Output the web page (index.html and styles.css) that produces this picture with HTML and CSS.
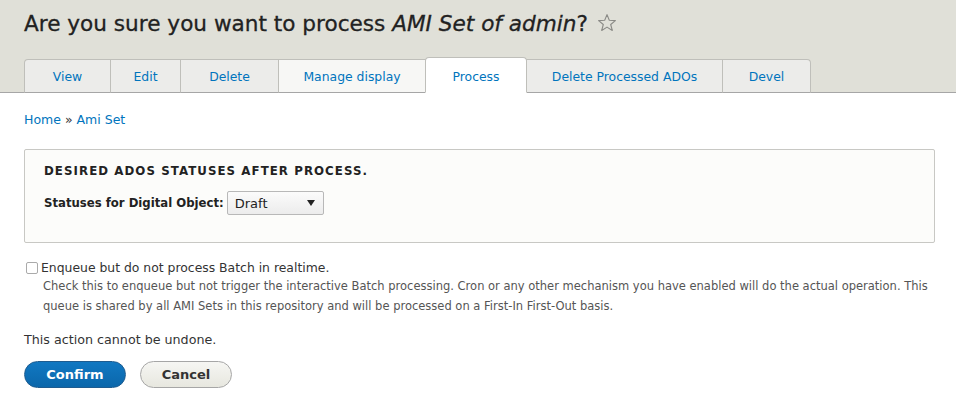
FILE: index.html
```html
<!DOCTYPE html>
<html>
<head>
<meta charset="utf-8">
<link rel="stylesheet" href="styles.css">
</head>
<body>
<header class="header">
  <h1 class="title">Are you sure you want to process <em>AMI Set of admin</em>? <svg class="star" width="20" height="20" viewBox="0 0 20 20"><path d="M10 1.6 L12.3 7.3 L18.4 7.6 L13.7 11.5 L15.3 17.5 L10 14.1 L4.7 17.5 L6.3 11.5 L1.6 7.6 L7.7 7.3 Z" fill="none" stroke="#8a8a86" stroke-width="1.1" stroke-linejoin="round"/></svg></h1>
  <nav class="tabs">
    <a class="tab t-view">View</a>
    <a class="tab t-edit">Edit</a>
    <a class="tab t-delete">Delete</a>
    <a class="tab t-manage">Manage display</a>
    <a class="tab t-process active">Process</a>
    <a class="tab t-dpa">Delete Processed ADOs</a>
    <a class="tab t-devel">Devel</a>
  </nav>
</header>
<main class="content">
  <div class="breadcrumb"><a>Home</a> » <a>Ami Set</a></div>
  <fieldset class="fieldset">
    <div class="legend">Desired ADOs statuses after process.</div>
    <div class="field">
      <label class="label">Statuses for Digital Object:</label>
      <div class="select"><span>Draft</span><span class="arrow"></span></div>
    </div>
  </fieldset>
  <div class="check">
    <div class="check-row"><span class="box"></span><span class="check-label">Enqueue but do not process Batch in realtime.</span></div>
    <div class="desc">Check this to enqueue but not trigger the interactive Batch processing. Cron or any other mechanism you have enabled will do the actual operation. This queue is shared by all AMI Sets in this repository and will be processed on a First-In First-Out basis.</div>
  </div>
  <p class="warn">This action cannot be undone.</p>
  <div class="actions">
    <button class="btn primary">Confirm</button>
    <button class="btn">Cancel</button>
  </div>
</main>
</body>
</html>
```
FILE: styles.css
```css
html, body { margin: 0; padding: 0; background: #fff; }
body {
  font-family: "DejaVu Sans", "Lucida Grande", sans-serif;
  font-size: 13px;
  color: #333;
}
.header {
  background: #e0e0d8;
  border-bottom: 1px solid #a6a6a6;
  padding: 0 24px;
  height: 93px;
  box-sizing: border-box;
  display: flex;
  flex-direction: column;
  justify-content: space-between;
}
.title {
  margin: 0;
  padding-top: 9px;
  font-size: 21.6px;
  font-weight: normal;
  color: #222;
  line-height: 30px;
  display: flex;
  align-items: center;
  white-space: pre;
  -webkit-text-stroke: 0.3px #222;
}
.title em { font-style: italic; }
.star { margin-left: 2px; margin-top: -2px; }
.tabs {
  display: flex;
  align-items: flex-end;
  margin-bottom: -1px;
}
.tab {
  display: block;
  box-sizing: border-box;
  height: 34px;
  line-height: 33px;
  padding: 0;
  text-align: center;
  white-space: nowrap;
  background: #ececea;
  border: 1px solid #bfbfba;
  border-bottom: 1px solid #a6a6a6;
  margin-right: -1px;
  color: #0074bd;
  font-size: 12.4px;
}
.t-view { width: 87px; border-top-left-radius: 4px; }
.t-edit { width: 71px; }
.t-delete { width: 99px; }
.t-manage { width: 148px; background: #f7f7f5; }
.t-process { width: 102px; }
.t-dpa { width: 197px; }
.t-devel { width: 89px; border-top-right-radius: 4px; }
.tab.active {
  background: #fff;
  height: 36px;
  line-height: 37px;
  border-radius: 4px 4px 0 0;
  border-bottom-color: #fff;
  position: relative;
  z-index: 1;
}
.content { padding: 0 21px 0 24px; }
.breadcrumb {
  margin-top: 19px;
  color: #333;
  font-size: 12.5px;
  line-height: 16px;
}
.breadcrumb a { color: #0074bd; }
.fieldset {
  margin: 21px 0 0 0;
  padding: 13px 19px 27px 19px;
  border: 1px solid #c8c8c4;
  border-radius: 2px;
  background: #fcfcfa;
  min-width: 0;
}
.legend {
  font-weight: bold;
  text-transform: uppercase;
  letter-spacing: 0.09em;
  font-size: 11.8px;
  color: #222;
  line-height: 16px;
}
.field { display: flex; align-items: center; margin-top: 12px; }
.label { font-weight: bold; font-size: 11.7px; color: #222; margin-right: 3px; }
.select {
  width: 97px;
  height: 24px;
  box-sizing: border-box;
  border: 1px solid #b8b8b8;
  border-radius: 2px;
  background: linear-gradient(#fbfbfb, #ececec);
  display: flex;
  align-items: center;
  justify-content: space-between;
  padding: 0 8px 0 7px;
  font-size: 13px;
  color: #222;
}
.arrow {
  width: 0; height: 0;
  border-left: 4.5px solid transparent;
  border-right: 4.5px solid transparent;
  border-top: 6px solid #222;
}
.check { margin-top: 17px; }
.check-row { display: flex; align-items: center; }
.box {
  width: 10px; height: 10px;
  border: 1px solid #aaa;
  border-radius: 2px;
  background: #fff;
  margin: 0 3px 0 2px;
}
.check-label { font-size: 12.4px; color: #333; line-height: 16px; }
.desc {
  margin: 0 0 0 19px;
  font-size: 11.5px;
  line-height: 20px;
  color: #555;
}
.warn { margin: 16px 0 0 0; font-size: 12.7px; line-height: 16px; color: #333; }
.actions { display: flex; gap: 14px; margin-top: 13px; }
.btn {
  height: 27px;
  padding: 0 20px;
  border-radius: 14px;
  border: 1px solid #a6a6a6;
  background: linear-gradient(#f6f6f3, #e7e7df);
  font-family: inherit;
  font-weight: bold;
  font-size: 13px;
  color: #333;
  width: 92px;
}
.btn.primary {
  width: 102px;
  background: linear-gradient(#1178c2, #0b67ab);
  border-color: #1e5c90;
  color: #fff;
}
```
